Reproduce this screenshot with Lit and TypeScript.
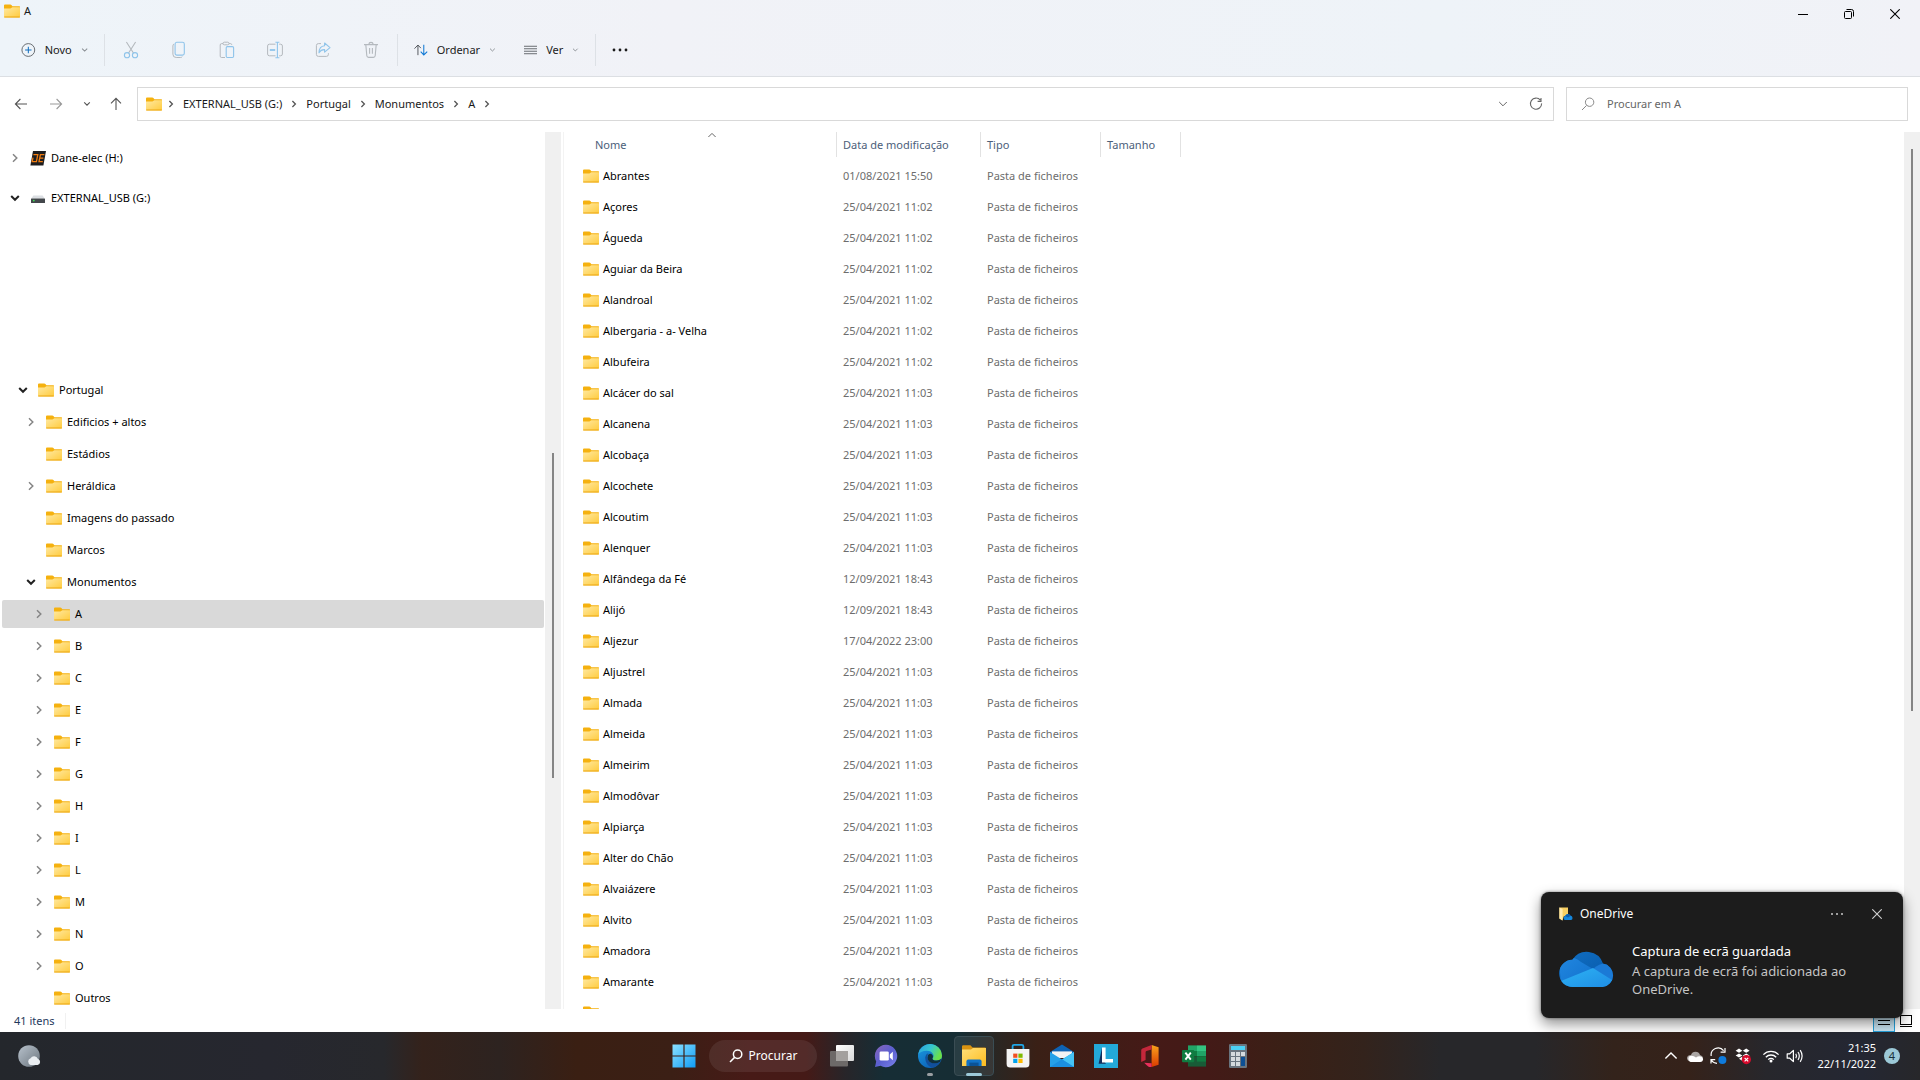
import { LitElement, html, css, svg, nothing, type TemplateResult } from "lit";
import { customElement } from "lit/decorators.js";
import { classMap } from "lit/directives/class-map.js";
import { styleMap } from "lit/directives/style-map.js";

interface TreeNode {
  label: string;
  level: number;
  state: "open" | "closed" | "leaf";
  selected?: boolean;
}

interface FileRow {
  name: string;
  date: string;
}

const FOLDERS: TreeNode[] = [
  { label: "Portugal", level: 1, state: "open" },
  { label: "Edificios + altos", level: 2, state: "closed" },
  { label: "Estádios", level: 2, state: "leaf" },
  { label: "Heráldica", level: 2, state: "closed" },
  { label: "Imagens do passado", level: 2, state: "leaf" },
  { label: "Marcos", level: 2, state: "leaf" },
  { label: "Monumentos", level: 2, state: "open" },
  { label: "A", level: 3, state: "closed", selected: true },
  ...["B", "C", "E", "F", "G", "H", "I", "L", "M", "N", "O"].map(
    (label): TreeNode => ({ label, level: 3, state: "closed" }),
  ),
  { label: "Outros", level: 3, state: "leaf" },
];

const FILES: FileRow[] = [
  ["Abrantes", "01/08/2021 15:50"],
  ["Açores", "25/04/2021 11:02"],
  ["Águeda", "25/04/2021 11:02"],
  ["Aguiar da Beira", "25/04/2021 11:02"],
  ["Alandroal", "25/04/2021 11:02"],
  ["Albergaria - a- Velha", "25/04/2021 11:02"],
  ["Albufeira", "25/04/2021 11:02"],
  ["Alcácer do sal", "25/04/2021 11:03"],
  ["Alcanena", "25/04/2021 11:03"],
  ["Alcobaça", "25/04/2021 11:03"],
  ["Alcochete", "25/04/2021 11:03"],
  ["Alcoutim", "25/04/2021 11:03"],
  ["Alenquer", "25/04/2021 11:03"],
  ["Alfândega da Fé", "12/09/2021 18:43"],
  ["Alijó", "12/09/2021 18:43"],
  ["Aljezur", "17/04/2022 23:00"],
  ["Aljustrel", "25/04/2021 11:03"],
  ["Almada", "25/04/2021 11:03"],
  ["Almeida", "25/04/2021 11:03"],
  ["Almeirim", "25/04/2021 11:03"],
  ["Almodôvar", "25/04/2021 11:03"],
  ["Alpiarça", "25/04/2021 11:03"],
  ["Alter do Chão", "25/04/2021 11:03"],
  ["Alvaiázere", "25/04/2021 11:03"],
  ["Alvito", "25/04/2021 11:03"],
  ["Amadora", "25/04/2021 11:03"],
  ["Amarante", "25/04/2021 11:03"],
].map(([name, date]) => ({ name, date }));

const CRUMBS = ["EXTERNAL_USB (G:)", "Portugal", "Monumentos", "A"];

/* ---- icons ---- */

const icon = (w: number, h: number, body: TemplateResult | unknown) => html`
  <svg width=${w} height=${h} viewBox="0 0 ${w} ${h}" fill="none" aria-hidden="true">${body}</svg>
`;

const folder = () =>
  icon(16, 14, svg`
    <defs><linearGradient id="ff" x1="0" y1="0" x2="1" y2="1">
      <stop offset="0" stop-color="#ffe9a2"/><stop offset="1" stop-color="#ffcb3d"/>
    </linearGradient></defs>
    <path d="M0 1.5Q0 0.5 1 0.5H6.3Q7 0.5 7.4 1.1L8.4 2.2H15.4Q16 2.2 16 2.8V6H0Z" fill="#f5b10f"/>
    <path d="M0 4.6H6.4L8.4 3.2H16V12.9Q16 13.5 15.4 13.5H0.6Q0 13.5 0 12.9Z" fill="url(#ff)"/>
    <path d="M0.3 13H15.7" stroke="#eba613"/>`);

const chevRight = (color: string, sw = 1) =>
  icon(8, 10, svg`<path d="M2 1.2L5.8 5L2 8.8" stroke=${color} stroke-width=${sw}/>`);
const chevDown = (color: string, sw = 1) =>
  icon(10, 8, svg`<path d="M1.2 2L5 5.8L8.8 2" stroke=${color} stroke-width=${sw}/>`);
const smallDown = (color: string) =>
  icon(8, 6, svg`<path d="M1.2 1.4L4 4.2L6.8 1.4" stroke=${color} stroke-width="1.1"/>`);

const GRAY = "#b4b9be";
const BLUE = "#8fc4ea";

const plusCircle = () =>
  icon(16, 16, svg`<circle cx="8" cy="8" r="7" stroke="#5d6166"/><path d="M8 4.5V11.5M4.5 8H11.5" stroke="#0f6cbd" stroke-width="1.1"/>`);
const cut = () =>
  icon(16, 18, svg`<path d="M3.4 1L10.6 12.2M12.6 1L5.4 12.2" stroke=${GRAY} stroke-width="1.1"/>
    <circle cx="4" cy="14.2" r="2.6" stroke=${BLUE} stroke-width="1.1"/><circle cx="12" cy="14.2" r="2.6" stroke=${BLUE} stroke-width="1.1"/>`);
const copy = () =>
  icon(16, 18, svg`<path d="M3 3Q1.9 3.4 1.9 5V13.2Q1.9 16.5 5.2 16.5H9.4Q10.8 16.5 11.3 15.6" stroke=${GRAY}/>
    <rect x="4.1" y="1.3" width="9.2" height="12.8" rx="1.8" stroke=${BLUE} stroke-width="1.1"/>`);
const paste = () =>
  icon(16, 18, svg`<path d="M6 16.5H2.6Q1.2 16.5 1.2 15.1V4Q1.2 2.6 2.6 2.6H4M10 2.6H11.6Q12.6 2.6 12.8 3.8" stroke=${GRAY}/>
    <rect x="4" y="1.2" width="6" height="2.6" rx="1.3" stroke=${GRAY}/>
    <rect x="7.2" y="5.6" width="7.4" height="10.9" rx="1.2" stroke=${BLUE} stroke-width="1.1"/>`);
const rename = () =>
  icon(18, 18, svg`<path d="M9.5 3.2H3.4Q1.6 3.2 1.6 5V13Q1.6 14.8 3.4 14.8H9.5M13.2 3.2H14.6Q16.4 3.2 16.4 5V13Q16.4 14.8 14.6 14.8H13.2" stroke=${GRAY}/>
    <path d="M11.4 1.2V16.8M9.4 1.2H13.4M9.4 16.8H13.4" stroke=${BLUE} stroke-width="1.1"/><path d="M3.8 9H9.2" stroke=${BLUE} stroke-width="1.8"/>`);
const share = () =>
  icon(16, 18, svg`<path d="M6 2.6H3.4Q1.4 2.6 1.4 4.6V13.4Q1.4 15.4 3.4 15.4H11.4Q13.4 15.4 13.4 13.4V12.2" stroke=${GRAY}/>
    <path d="M9.6 2L15 6.6L9.6 11.2V8.6Q6 8.4 4 11.8Q4.2 5.2 9.6 4.8Z" stroke=${BLUE} stroke-width="1.1" stroke-linejoin="round"/>`);
const trash = () =>
  icon(16, 18, svg`<path d="M1 3.6H15M2.8 3.6L3.8 14.8Q4 16.4 5.6 16.4H10.4Q12 16.4 12.2 14.8L13.2 3.6M5.8 3.4Q6 1.4 8 1.4Q10 1.4 10.2 3.4M6.6 7V12.8M9.4 7V12.8" stroke=${GRAY} stroke-width="1.1"/>`);
const sort = () =>
  icon(16, 14, svg`<path d="M4.6 13V1.4M0.6 5.4L4.6 1.2L8 4.8" stroke="#4d5156" stroke-width="1.1"/>
    <path d="M11.4 1V12.6M7.8 9L11.4 12.8L15.4 8.8" stroke="#0f78d4" stroke-width="1.2"/>`);
const lines = () =>
  icon(16, 12, svg`<path d="M0 1.5H16M0 4.5H16M0 7.5H16M0 10.5H16" stroke="#4d5156"/>`);
const dots = (color: string) =>
  icon(18, 4, svg`<g fill=${color}><circle cx="3" cy="2" r="1.4"/><circle cx="9" cy="2" r="1.4"/><circle cx="15" cy="2" r="1.4"/></g>`);
const arrow = (color: string, angle: number) =>
  icon(14, 14, svg`<path transform="rotate(${angle} 7 7)" d="M13 7H1.4M6.4 2L1.4 7L6.4 12" stroke=${color} stroke-width="1.1"/>`);
const refresh = () =>
  icon(14, 14, svg`<path d="M11.4 3.2A5.6 5.6 0 1 0 12.6 6.4M12 1V4.4H8.6" stroke="#666" stroke-width="1.1"/>`);
const magnifier = (color: string, sw: number, size = 14) => html`
  <svg width=${size} height=${size} viewBox="0 0 14 14" fill="none" aria-hidden="true">
    <circle cx="8.6" cy="5.2" r="4.2" stroke=${color} stroke-width=${sw}/><path d="M5.6 8.4L1 13" stroke=${color} stroke-width=${sw}/>
  </svg>`;
const minimize = () => icon(10, 10, svg`<path d="M0 5.5H10" stroke="#000"/>`);
const restore = () =>
  icon(10, 10, svg`<rect x="0.5" y="2.5" width="7" height="7" rx="1" stroke="#000"/><path d="M2.5 0.5H7.5Q9.5 0.5 9.5 2.5V7.5" stroke="#000"/>`);
const cross = (color: string) => icon(10, 10, svg`<path d="M0.3 0.3L9.7 9.7M9.7 0.3L0.3 9.7" stroke=${color} stroke-width="1.1"/>`);

const daneElec = () =>
  icon(16, 16, svg`<path d="M3 1H16L13.4 15.4H0.4Z" fill="#1d1d1f"/>
    <path d="M3.4 4.6H7.8L6.4 11.6H2.2L3 7.6M14.4 4.6H10.4L9 11.6H12.8M9.6 8.1H13.4" stroke="#f07c10" stroke-width="1.3"/>`);
const drive = () =>
  icon(16, 16, svg`<path d="M3.4 5.4H12.6L14.8 8.4H1.2Z" fill="#dcdfe3"/><rect x="1" y="8.4" width="14" height="4.6" rx="0.5" fill="#43474b"/><circle cx="3.8" cy="10.6" r="0.9" fill="#3ddc55"/>`);

const weather = () =>
  icon(24, 24, svg`<defs><linearGradient id="moon" x1="0" y1="0" x2="1" y2="1"><stop offset="0" stop-color="#b8c2cc"/><stop offset="1" stop-color="#6b757e"/></linearGradient></defs>
    <circle cx="12" cy="12" r="10.8" fill="url(#moon)"/><path d="M13.6 21A3.6 3.6 0 0 1 13.6 14.2A4 4 0 0 1 20.8 14.8A3.2 3.2 0 0 1 20.6 21Z" fill="#e9edf1"/>`);

const startLogo = () =>
  icon(24, 24, svg`<defs><linearGradient id="win" x1="0" y1="0" x2="1" y2="1"><stop offset="0" stop-color="#8be0ff"/><stop offset="1" stop-color="#0f9bf5"/></linearGradient></defs>
    <path d="M0.5 0.5H11.4V11.4H0.5ZM12.6 0.5H23.5V11.4H12.6ZM0.5 12.6H11.4V23.5H0.5ZM12.6 12.6H23.5V23.5H12.6Z" fill="url(#win)"/>`);
const taskView = () =>
  icon(24, 24, svg`<defs><linearGradient id="tv" x1="0" y1="0" x2="1" y2="1"><stop offset="0" stop-color="#fff"/><stop offset="1" stop-color="#d9d9d9"/></linearGradient></defs>
    <rect x="6" y="1" width="18" height="16" rx="1" fill="url(#tv)"/><rect y="7" width="18" height="15.5" rx="1" fill="#6d6968"/><rect x="6" y="7" width="12" height="10" fill="#a3a09e"/>`);
const chat = () =>
  icon(24, 24, svg`<defs><linearGradient id="ch" x1="0" y1="0" x2="1" y2="1"><stop offset="0" stop-color="#8a66b8"/><stop offset="0.5" stop-color="#5a5fd0"/><stop offset="1" stop-color="#7b83eb"/></linearGradient></defs>
    <path d="M12 0.8A11.2 11.2 0 1 1 6.6 21.8L1 23L2.2 17.4A11.2 11.2 0 0 1 12 0.8Z" fill="url(#ch)"/>
    <rect x="5.6" y="7.4" width="9.2" height="9.2" rx="1.4" fill="#fff"/><path d="M15.8 10.6L18.8 7.8V16.2L15.8 13.4Z" fill="#fff"/>`);
const edge = () =>
  icon(24, 24, svg`<defs>
      <linearGradient id="e1" x1="0" y1="0" x2="1" y2="0.4"><stop offset="0" stop-color="#2b9fe0"/><stop offset="0.55" stop-color="#36c6cf"/><stop offset="1" stop-color="#6ae04a"/></linearGradient>
      <linearGradient id="e2" x1="0" y1="0" x2="0.6" y2="1"><stop offset="0" stop-color="#1b9de2"/><stop offset="1" stop-color="#0c62b8"/></linearGradient></defs>
    <circle cx="12" cy="12" r="12" fill="url(#e2)"/>
    <path d="M0.2 10A12 12 0 0 1 24 11.4Q24 16.4 19 16.6Q14.6 16.8 14.4 14.6Q16.4 12.6 15 10Q13 6.6 8.4 6.8Q3 7 0.2 10Z" fill="url(#e1)"/>
    <path d="M7.2 13.6Q7.4 10.4 10.4 9Q7 15 12.6 18.4Q17 20.6 22.2 17.8Q19.4 22.6 14 23.8Q7.4 21.4 7.2 13.6Z" fill="#124f9c"/>
    <path d="M14.4 14.6Q14.6 16.8 19 16.6Q21.4 16.5 23 14.8L22.2 17.8Q17 20.6 12.6 18.4Q8.6 16 9.8 11.4Q11 9.2 13.4 10Q16 11.6 14.4 14.6Z" fill="#10303d"/>`);
const explorer = () =>
  icon(24, 24, svg`<defs><linearGradient id="ex" x1="0" y1="0" x2="1" y2="1"><stop offset="0" stop-color="#ffe07a"/><stop offset="1" stop-color="#fdbc1f"/></linearGradient></defs>
    <path d="M0 2.4Q0 1.2 1.2 1.2H8.4L10.6 3.4H22.8Q24 3.4 24 4.6V9H0Z" fill="#d99311"/><path d="M0 5.6H9L11 4H24V22H0Z" fill="url(#ex)"/>
    <path d="M4.4 22V17.4Q4.4 15.6 6.2 15.6H17.8Q19.6 15.6 19.6 17.4V22Z" fill="#1173c7"/><path d="M7.4 18.6H16.6V22H7.4Z" fill="#0b5396"/>`);
const store = () =>
  icon(24, 24, svg`<path d="M6.6 6V2.4Q6.6 0.9 8.2 0.9H15.8Q17.4 0.9 17.4 2.4V6" stroke="#1fa7e8" stroke-width="1.8"/>
    <path d="M0.6 5H23.4V20Q23.4 23.6 19.8 23.6H4.2Q0.6 23.6 0.6 20Z" fill="#f4f4f4"/>
    <path d="M7.2 9.6H11.4V13.8H7.2Z" fill="#f25022"/><path d="M12.4 9.6H16.6V13.8H12.4Z" fill="#7fba00"/><path d="M7.2 14.8H11.4V19H7.2Z" fill="#00a4ef"/><path d="M12.4 14.8H16.6V19H12.4Z" fill="#ffb900"/>`);
const mail = () =>
  icon(24, 24, svg`<path d="M0 8L12 0.6L24 8V12H0Z" fill="#0e62b3"/><path d="M2 7.4H22V14H2Z" fill="#f3f3f3"/><path d="M0 8V23H24V8L12 15.6Z" fill="#26a0e8"/><path d="M24 8V23L12 15.6Z" fill="#45c3f5"/><path d="M0 23L12 15.2L24 23Z" fill="#1b8fe0"/>`);
const letterTile = () =>
  icon(24, 24, svg`<rect width="24" height="24" fill="#23a9d9"/><path d="M8 4L4.6 19.8H12L9 16Z" fill="#14305e"/><path d="M8 3.6H11.6V15H19V18.6H8Z" fill="#fff"/>`);
const office = () =>
  icon(24, 24, svg`<defs><linearGradient id="of" x1="0" y1="0" x2="0" y2="1"><stop offset="0" stop-color="#f9a21c"/><stop offset="1" stop-color="#d83b01"/></linearGradient></defs>
    <path d="M13.6 1L20.6 3.2V20.8L13.6 23V5.6Z" fill="url(#of)"/><path d="M13.6 1L4.4 4.6Q3.2 5.2 3.2 6.4V18L7.6 16V8.2Q7.6 7.4 8.4 7.1L13.6 5.6Z" fill="#c4273b"/><path d="M6.2 18.8L13.6 19.2V23L11 22.9Q8.6 21.6 6.2 18.8Z" fill="#e8305c"/>`);
const excel = () =>
  icon(24, 24, svg`<path d="M6 1.4H15V7H6Z" fill="#21a366"/><path d="M15 1.4H24V7H15Z" fill="#33c481"/><path d="M6 7H15V12.4H6Z" fill="#107c41"/><path d="M15 7H24V12.4H15Z" fill="#21a366"/><path d="M6 12.4H24V22.6H6Z" fill="#185c37"/><path d="M15 12.4H24V17.6H15Z" fill="#107c41"/>
    <rect y="6" width="12.2" height="12.2" rx="1" fill="#107c41"/><path d="M3.4 8.6L8.8 15.6M8.8 8.6L3.4 15.6" stroke="#fff" stroke-width="1.9"/>`);
const calculator = () =>
  icon(24, 24, svg`<rect x="3" width="18" height="24" rx="1.2" fill="#69747f"/><rect x="5" y="2" width="14" height="4" fill="#4bd0f5"/>
    <g fill="#d5dade"><path d="M5 8H9V12H5ZM10 8H14V12H10ZM15 8H19V12H15ZM5 13H9V17H5ZM10 13H14V17H10ZM5 18H9V22H5ZM10 18H14V22H10Z"/></g><rect x="15" y="13" width="4" height="9" fill="#0d4f94"/>`);

const trayUp = () => icon(14, 14, svg`<path d="M1.4 9.6L7 4L12.6 9.6" stroke="#fff" stroke-width="1.4"/>`);
const trayCloud = () =>
  icon(18, 14, svg`<path d="M5 6A4.8 4.8 0 0 1 14 6Q17 7 17 9L5 12.6Q1 12 1 9Q1.4 6 5 6Z" fill="#aaa5a3"/><path d="M4.6 13A3.6 3.6 0 0 1 3.4 7.2Q7 6 10 8.6Q13 6.4 15.8 8Q17.4 9 17 11Q16.4 13 14.4 13Z" fill="#fff"/>`);
const traySync = () =>
  icon(20, 18, svg`<path d="M2.2 9A7 7 0 0 1 14.6 3.6M16 1V5.2H11.6M2 16.6V12.6H6.2M2.2 13Q4 16 8 16.4" stroke="#fff" stroke-width="1.2"/><circle cx="13.4" cy="13" r="4" fill="#0f7bdc"/>`);
const trayDropbox = () =>
  icon(18, 18, svg`<path d="M5 1.6L8.4 3.7L5 5.8L1.6 3.7ZM12.2 1.6L15.6 3.7L12.2 5.8L8.8 3.7ZM5 6.4L8.4 8.5L5 10.6L1.6 8.5ZM12.2 6.4L15.6 8.5L12.2 10.6L8.8 8.5ZM5 11.8L8.4 9.6L8.6 14Z" fill="#fff"/>
    <circle cx="12.4" cy="12.6" r="4.6" fill="#d80b2d"/><path d="M10.6 10.8L14.2 14.4M14.2 10.8L10.6 14.4" stroke="#fff" stroke-width="1.2"/>`);
const trayWifi = () =>
  icon(18, 14, svg`<g stroke="#fff" stroke-width="1.3"><path d="M1.4 5.6A10.6 10.6 0 0 1 16.6 5.6"/><path d="M3.8 8.2A7.2 7.2 0 0 1 14.2 8.2"/><path d="M6.2 10.6A4 4 0 0 1 11.8 10.6"/></g><circle cx="9" cy="12" r="1.5" fill="#fff"/>`);
const traySpeaker = () =>
  icon(18, 14, svg`<path d="M1.2 4.8H3.8L7.4 1.4V12.6L3.8 9.2H1.2Z" stroke="#fff" stroke-width="1.2" stroke-linejoin="round"/><g stroke="#fff" stroke-width="1.2"><path d="M9.8 4.8Q11.2 7 9.8 9.2"/><path d="M12 3Q14.6 7 12 11"/><path d="M14.2 1.2Q18 7 14.2 12.8"/></g>`);

const toastAppIcon = () =>
  icon(14, 14, svg`<path d="M0.4 0.6H9V9H5L3.2 13.6L0.4 11.6Z" fill="#f7cf63"/><path d="M0.4 0.6L3.6 2V13.4L0.4 11.6Z" fill="#ffe9ab"/>
    <path d="M5.6 13A2.4 2.4 0 0 1 6.2 8.8A3 3 0 0 1 11.6 8.8A2.2 2.2 0 0 1 12.2 13Z" fill="#1486dc"/><path d="M6 9Q9 5 11.6 8.8L9 10.6Z" fill="#0b5cae"/>`);
const cloudLogo = () =>
  icon(56, 38, svg`<defs>
      <linearGradient id="c1" x1="0" y1="0" x2="1" y2="1"><stop offset="0" stop-color="#1270c4"/><stop offset="1" stop-color="#0556a6"/></linearGradient>
      <linearGradient id="c2" x1="0" y1="0" x2="1" y2="1"><stop offset="0" stop-color="#2187e0"/><stop offset="1" stop-color="#1170cc"/></linearGradient>
      <linearGradient id="c3" x1="0" y1="0" x2="1" y2="1"><stop offset="0" stop-color="#2db2f4"/><stop offset="1" stop-color="#1e8ce4"/></linearGradient>
      <clipPath id="cc"><path d="M14 37A13.6 13.6 0 0 1 13.4 9.8A17 17 0 0 1 44 13.6A11.8 11.8 0 0 1 43.6 37Z"/></clipPath></defs>
    <g clip-path="url(#cc)"><rect width="56" height="38" fill="url(#c1)"/>
      <path d="M0 8Q14 5 22 12L34 19L2 36Z" fill="url(#c2)"/><path d="M34 19Q42 12 50 14L56 22V33Z" fill="#1b7ad6"/>
      <path d="M2 31L34 18L56 32V38H4Z" fill="url(#c3)"/></g>`);

/* ---- window header: title bar, command bar ---- */

@customElement("explorer-header")
class ExplorerHeader extends LitElement {
  static styles = css`
    :host { display: block; background: linear-gradient(90deg, #eef4f9, #f1f2f7 35%, #eef3f8 75%, #f1f2f7); border-bottom: 1px solid #dcdfe3; }
    button { font: inherit; color: inherit; background: none; border: 0; padding: 0; display: flex; align-items: center; justify-content: center; }
    .title { display: flex; align-items: flex-start; height: 28px; padding: 0 2px 0 4px; }
    .name { display: flex; align-items: center; gap: 4px; height: 22px; flex: 1; margin: 0; font: inherit; }
    .win { width: 46px; height: 28px; }
    .bar { display: flex; align-items: center; height: 44px; padding: 0 0 4px 11px; }
    .menu { height: 32px; padding: 0 10px; gap: 9px; justify-content: flex-start; line-height: 18px; }
    .menu svg:last-child { margin-left: auto; }
    .new { width: 87px; }
    .order { width: 102px; margin-right: 8px; }
    .view { width: 75px; }
    .tools { display: flex; gap: 8px; }
    .tool { width: 40px; height: 32px; }
    .more { width: 36px; height: 32px; }
    .sep { width: 1px; height: 32px; background: #dde1e6; margin: 0 6px; }
  `;
  render() {
    const tools: [string, () => TemplateResult][] = [
      ["Cortar", cut], ["Copiar", copy], ["Colar", paste], ["Mudar o nome", rename], ["Partilhar", share], ["Eliminar", trash],
    ];
    return html`
      <div class="title">
        <h1 class="name">${folder()}<span>A</span></h1>
        <button class="win" aria-label="Minimizar">${minimize()}</button>
        <button class="win" aria-label="Restaurar">${restore()}</button>
        <button class="win" aria-label="Fechar">${cross("#000")}</button>
      </div>
      <div class="bar">
        <button class="menu new">${plusCircle()}<span>Novo</span>${smallDown("#8a8f94")}</button>
        <div class="sep"></div>
        <div class="tools">${tools.map(([l, i]) => html`<button class="tool" aria-label=${l} disabled>${i()}</button>`)}</div>
        <div class="sep"></div>
        <button class="menu order">${sort()}<span>Ordenar</span>${smallDown("#8a8f94")}</button>
        <button class="menu view">${lines()}<span>Ver</span>${smallDown("#8a8f94")}</button>
        <div class="sep"></div>
        <button class="more" aria-label="Ver mais">${dots("#1b1b1b")}</button>
      </div>
    `;
  }
}

@customElement("address-bar")
class AddressBar extends LitElement {
  static styles = css`
    :host { display: flex; align-items: center; box-sizing: border-box; height: 55px; padding: 0 12px 1px 3px; background: #fff; }
    button { background: none; border: 0; padding: 0; height: 32px; display: flex; align-items: center; justify-content: center; }
    .back { width: 36px; }
    .next { width: 34px; }
    .recent { width: 28px; }
    .up { width: 30px; }
    .path { flex: 1; display: flex; align-items: center; box-sizing: border-box; height: 34px; margin: 0 12px 0 6px; padding: 0 1px 0 8px; border: 1px solid #d9d9d9; }
    .crumbs { display: flex; align-items: center; gap: 8px; list-style: none; margin: 0; padding: 0 0 0 5px; flex: 1; }
    .crumb { display: flex; align-items: center; gap: 8px; }
    a { color: #191919; text-decoration: none; }
    .act { width: 33px; }
    .search { display: flex; align-items: center; gap: 12px; box-sizing: border-box; width: 342px; height: 34px; padding: 0 14px; border: 1px solid #d9d9d9; }
    input { flex: 1; min-width: 0; border: 0; padding: 0; outline: 0; font: inherit; background: none; }
    input::placeholder { color: #666; opacity: 1; }
  `;
  render() {
    return html`
      <button class="back" aria-label="Anterior">${arrow("#555", 0)}</button>
      <button class="next" aria-label="Seguinte">${arrow("#999", 180)}</button>
      <button class="recent" aria-label="Localizações recentes">${smallDown("#555")}</button>
      <button class="up" aria-label="Acima">${arrow("#555", 90)}</button>
      <nav class="path" aria-label="Caminho">
        ${folder()}
        <ol class="crumbs">
          <li class="crumb">${this.sep()}</li>
          ${CRUMBS.map((c) => html`<li class="crumb"><a href="#">${c}</a>${this.sep()}</li>`)}
        </ol>
        <button class="act" aria-label="Histórico">${chevDown("#666")}</button>
        <button class="act" aria-label="Atualizar">${refresh()}</button>
      </nav>
      <label class="search">
        ${magnifier("#8a8a8a", 1)}
        <input type="search" placeholder="Procurar em A" aria-label="Procurar em A" />
      </label>
    `;
  }
  private sep() {
    return icon(8, 8, svg`<path d="M2.4 1L5.4 4L2.4 7" stroke="#555" stroke-width="1.3"/>`);
  }
}

/* ---- navigation tree ---- */

@customElement("folder-tree")
class FolderTree extends LitElement {
  static styles = css`
    :host { display: flex; min-height: 0; background: #fff; }
    .scroll { flex: 1; min-width: 0; overflow: hidden; }
    .tree { display: flex; flex-direction: column; gap: 4px; list-style: none; margin: 0; padding: 0 1px 0 2px; }
    .drives { gap: 12px; padding-top: 12px; }
    .folders { padding-top: 164px; }
    .row { display: flex; align-items: center; box-sizing: border-box; width: 100%; height: 28px; padding: 0; border: 0; border-radius: 2px; background: none; color: #000; font: inherit; text-align: left; }
    .on { background: #d9d9d9; }
    .exp { display: flex; justify-content: center; width: 14px; margin-right: 8px; }
    .text { margin-left: 5px; }
    .track { width: 16px; background: #f0f0f0; padding: 321px 0 0 7px; box-sizing: border-box; }
    .thumb { width: 2px; height: 325px; background: #858585; }
  `;
  private row(label: string, level: number, state: string, glyph: TemplateResult, selected = false) {
    return html`<button
      class=${classMap({ row: true, on: selected })}
      style=${styleMap({ paddingLeft: `${6 + level * 8}px` })}
      aria-expanded=${state === "leaf" ? nothing : String(state === "open")}
    ><span class="exp">${state === "open" ? chevDown("#222", 2) : state === "closed" ? chevRight("#858585", 1.5) : nothing}</span>${glyph}<span class="text">${label}</span></button>`;
  }
  render() {
    return html`
      <nav class="scroll" aria-label="Pastas">
        <ul class="tree drives">
          <li>${this.row("Dane-elec (H:)", 0, "closed", daneElec())}</li>
          <li>${this.row("EXTERNAL_USB (G:)", 0, "open", drive())}</li>
        </ul>
        <ul class="tree folders">
          ${FOLDERS.map((n) => html`<li>${this.row(n.label, n.level, n.state, folder(), n.selected)}</li>`)}
        </ul>
      </nav>
      <div class="track"><div class="thumb"></div></div>
    `;
  }
}

/* ---- file list ---- */

@customElement("file-list")
class FileList extends LitElement {
  static styles = css`
    :host { display: flex; min-height: 0; min-width: 0; background: #fff; border-left: 1px solid #f3f3f3; }
    .scroll { flex: 1; min-width: 0; overflow: hidden; }
    table { border-collapse: separate; border-spacing: 0; table-layout: fixed; width: 617px; }
    .c1 { width: 273px; }
    .c2 { width: 144px; }
    .c3 { width: 120px; }
    .c4 { width: 80px; }
    th { position: relative; height: 25px; box-sizing: border-box; padding: 0 0 0 6px; border-right: 1px solid #e2e2e2; color: #4c607a; font-weight: 400; text-align: left; }
    th:first-child { padding-left: 31px; }
    .caret { position: absolute; left: 50%; top: 0; margin-left: 7px; display: flex; }
    .gap td { height: 3px; }
    td { height: 31px; padding: 0 0 0 6px; color: #6d6d6d; white-space: nowrap; }
    .name { padding-left: 19px; color: #000; }
    .file { display: flex; align-items: center; gap: 4px; }
    .track { width: 16px; background: #f0f0f0; padding: 17px 0 0 7px; box-sizing: border-box; }
    .thumb { width: 2px; height: 562px; background: #858585; }
  `;
  render() {
    return html`
      <div class="scroll">
        <table>
          <colgroup><col class="c1" /><col class="c2" /><col class="c3" /><col class="c4" /></colgroup>
          <thead>
            <tr>
              <th aria-sort="ascending">Nome<span class="caret">${icon(10, 6, svg`<path d="M1.4 5L5 1.4L8.6 5" stroke="#666"/>`)}</span></th>
              <th>Data de modificação</th><th>Tipo</th><th>Tamanho</th>
            </tr>
          </thead>
          <tbody>
            <tr class="gap"><td colspan="4"></td></tr>
            ${FILES.map((f) => html`<tr>
              <td class="name"><span class="file">${folder()}${f.name}</span></td>
              <td>${f.date}</td><td>Pasta de ficheiros</td><td></td>
            </tr>`)}
            <tr><td class="name"><span class="file">${folder()}</span></td><td></td><td></td><td></td></tr>
          </tbody>
        </table>
      </div>
      <div class="track"><div class="thumb"></div></div>
    `;
  }
}

/* ---- taskbar ---- */

@customElement("task-bar")
class TaskBar extends LitElement {
  static styles = css`
    :host {
      display: grid; grid-template-columns: 1fr auto 1fr; align-items: center; height: 48px; padding-left: 2px; color: #fff;
      background: linear-gradient(90deg, #24272c 0%, #26272f 14%, #27282c 20%, #34221b 22%, #2d2320 26%, #3a1f13 30%, #3b1f15 35%, #471a17 39%, #451a17 42%, #282529 44%, #162d35 46%, #162d34 50%, #2b2622 52%, #3a2016 54%, #451a17 60%, #431a17 63%, #3a2016 67%, #33231c 71%, #27272a 75%, #27272a 80%, #33231b 84%, #35221a 88%, #27272c 92%, #242733 97%, #27272a 100%);
    }
    button { background: none; border: 0; padding: 0; color: inherit; font: inherit; display: flex; align-items: center; justify-content: center; }
    .weather { width: 24px; height: 24px; margin-left: 15px; }
    .apps { display: flex; align-items: center; }
    .app { position: relative; width: 44px; height: 48px; }
    .active::before { content: ""; position: absolute; inset: 4px 2px; border: 1px solid #3a4d54; border-radius: 4px; background: #ffffff14; }
    .active svg { position: relative; }
    .mark { position: absolute; bottom: 4px; left: 19px; width: 6px; height: 3px; border-radius: 2px; background: #9a9fa3; }
    .active .mark { left: 14px; width: 16px; background: #9cc9d8; }
    .search { width: 108px; height: 32px; margin: 0 3px; gap: 6px; border-radius: 16px; background: #ffffff14; font-size: 12px; }
    .tray { display: flex; align-items: center; justify-content: flex-end; padding-right: 20px; }
    .icon { width: 24px; height: 40px; }
    .wifi { margin-left: 4px; }
    .clock { width: 69px; margin-right: 8px; text-align: right; line-height: 16px; flex-direction: column; align-items: flex-end; }
    .badge { width: 16px; height: 16px; border-radius: 8px; background: #9cc9d8; color: #16303a; font-size: 11px; }
  `;
  render() {
    const apps: [string, () => TemplateResult, string?][] = [
      ["Vista de tarefas", taskView], ["Conversa", chat], ["Edge", edge, "open"], ["Explorador", explorer, "active"], ["Store", store],
      ["Correio", mail], ["Leitor", letterTile], ["Office", office], ["Excel", excel], ["Calculadora", calculator],
    ];
    return html`
      <button class="weather" aria-label="Meteorologia">${weather()}</button>
      <div class="apps">
        <button class="app" aria-label="Iniciar">${startLogo()}</button>
        <button class="search">${magnifier("#fff", 1.5)}<span>Procurar</span></button>
        ${apps.map(([l, i, s]) => html`<button class=${classMap({ app: true, active: s === "active" })} aria-label=${l}>${i()}${s ? html`<span class="mark"></span>` : nothing}</button>`)}
      </div>
      <div class="tray">
        <button class="icon" aria-label="Ícones ocultos">${trayUp()}</button>
        <button class="icon" aria-label="OneDrive">${trayCloud()}</button>
        <button class="icon" aria-label="Sincronização">${traySync()}</button>
        <button class="icon" aria-label="Dropbox">${trayDropbox()}</button>
        <button class="icon wifi" aria-label="Rede">${trayWifi()}</button>
        <button class="icon" aria-label="Volume">${traySpeaker()}</button>
        <button class="clock"><span>21:35</span><span>22/11/2022</span></button>
        <button class="badge" aria-label="4 notificações">4</button>
      </div>
    `;
  }
}

/* ---- notification ---- */

@customElement("toast-card")
class ToastCard extends LitElement {
  static styles = css`
    :host { display: block; box-sizing: border-box; width: 362px; height: 126px; padding: 0 17px 0 18px; border-radius: 8px; background: #1c1c1c; color: #fff; box-shadow: 0 6px 14px #00000070, 0 0 3px #00000080; }
    button { background: none; border: 0; padding: 0; width: 40px; height: 32px; display: flex; align-items: center; justify-content: center; }
    .head { display: flex; align-items: center; height: 44px; margin-right: -11px; }
    .app { flex: 1; margin-left: 7px; font-size: 12px; }
    .body { display: flex; gap: 17px; }
    .logo { padding-top: 14px; display: flex; align-items: flex-start; }
    .text { font-size: 13px; line-height: 18px; padding-top: 6px; }
    p { margin: 0; }
    .msg { color: #c5c5c5; padding-top: 2px; }
  `;
  render() {
    return html`
      <div class="head">
        ${toastAppIcon()}<span class="app">OneDrive</span>
        <button aria-label="Opções">${icon(12, 2, svg`<g fill="#c8c8c8"><rect width="2" height="2" rx="1"/><rect x="5" width="2" height="2" rx="1"/><rect x="10" width="2" height="2" rx="1"/></g>`)}</button>
        <button aria-label="Fechar">${cross("#d0d0d0")}</button>
      </div>
      <div class="body">
        <div class="logo">${cloudLogo()}</div>
        <div class="text"><p>Captura de ecrã guardada</p><p class="msg">A captura de ecrã foi adicionada ao OneDrive.</p></div>
      </div>
    `;
  }
}

@customElement("app-root")
class AppRoot extends LitElement {
  static styles = css`
    :host { position: relative; display: flex; flex-direction: column; height: 100vh; overflow: hidden; background: #fff; color: #1b1b1b; font: 11px/16px "Noto Sans", "Open Sans", sans-serif; }
    .panes { flex: 1; min-height: 0; display: grid; grid-template-columns: 561px 1fr; column-gap: 2px; }
    .status { display: flex; align-items: center; height: 23px; padding: 0 8px 0 14px; color: #1e395b; }
    .count { padding-right: 10px; border-right: 1px solid #f1f1f1; margin-right: auto; }
    .status button { padding: 0; border: 0; background: none; display: flex; align-items: center; justify-content: center; width: 22px; height: 23px; box-sizing: border-box; }
    .status .details { border: 1px solid #26a0da; background: #cce8f6; margin-right: 5px; }
    .status .large { width: 12px; }
    .toast { position: absolute; right: 17px; bottom: 62px; }
  `;
  render() {
    return html`
      <explorer-header></explorer-header>
      <address-bar></address-bar>
      <main class="panes"><folder-tree></folder-tree><file-list></file-list></main>
      <footer class="status">
        <span class="count">41 itens</span>
        <button class="details" aria-label="Detalhes">${icon(12, 12, svg`<path d="M0 1.5H12M0 5.5H12M0 9.5H12" stroke="#000"/>`)}</button>
        <button class="large" aria-label="Ícones grandes">${icon(12, 14, svg`<rect x="0.5" y="1.5" width="11" height="9" stroke="#000"/><path d="M0 12.5H12" stroke="#000"/>`)}</button>
      </footer>
      <task-bar></task-bar>
      <toast-card class="toast" role="status"></toast-card>
    `;
  }
}
